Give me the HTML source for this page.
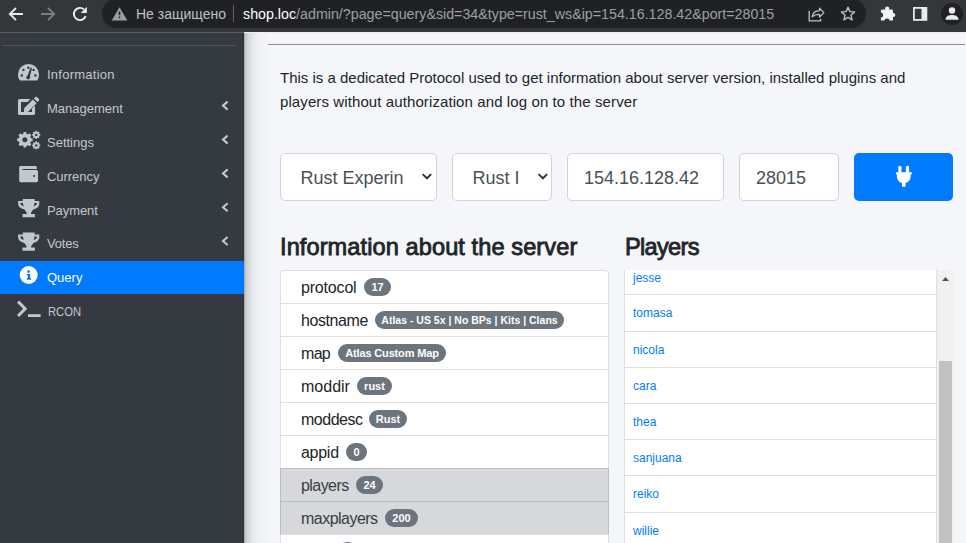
<!DOCTYPE html>
<html><head><meta charset="utf-8">
<style>
*{box-sizing:border-box;margin:0;padding:0}
html,body{width:966px;height:543px;overflow:hidden;font-family:"Liberation Sans",sans-serif;background:#f4f6f9}
.abs{position:absolute}
svg{position:absolute;overflow:visible}
#toolbar{position:absolute;left:0;top:0;width:966px;height:32px;background:#35363a;z-index:3}
#pill{position:absolute;left:102px;top:-1px;width:764px;height:29px;background:#202124;border-radius:15px}
#sidebar{position:absolute;left:0;top:33px;width:244px;height:510px;background:#343a40;border-right:1px solid #2b3036;z-index:2}
#shadow{position:absolute;left:244px;top:33px;width:28px;height:510px;z-index:2;background:linear-gradient(to right,rgba(0,0,0,.42) 0px,rgba(0,0,0,.2) 1px,rgba(0,0,0,.13) 4px,rgba(0,0,0,.075) 8px,rgba(0,0,0,.04) 12px,rgba(0,0,0,.016) 18px,rgba(0,0,0,0) 26px)}
#content{position:absolute;left:244px;top:33px;width:722px;height:510px;background:#f4f6f9;z-index:1}
.nav{position:absolute;left:0;width:244px;height:33px;color:#c2c7d0;font-size:13px}
.nav .t{position:absolute;left:47px;top:9px;white-space:nowrap}
.nav.active{background:#007bff;color:#fff}
.txt{position:absolute;color:#212529;white-space:nowrap}
.fc{position:absolute;top:120px;height:48px;background:#fff;border:1px solid #ced4da;border-radius:5px;font-size:18px;color:#495057}
.fc span{position:absolute;top:14px;white-space:nowrap}
.badge{position:absolute;top:7px;height:18px;line-height:18px;text-align:center;background:#6c757d;color:#fff;font-weight:700;font-size:11px;border-radius:9px;white-space:nowrap}
.row{position:absolute;left:36px;width:329px;height:34px;border:1px solid rgba(0,0,0,.125);background:#fff;font-size:16px;color:#212529}
.row .t{position:absolute;left:20px;top:7.6px;white-space:nowrap}
.row.g{background:#d6d8db;color:#383d41}
.prow{position:absolute;left:0;width:313px;border:1px solid rgba(0,0,0,.125);background:#fff;font-size:12px;color:#007bff}
.prow .t{position:absolute;left:8px;white-space:nowrap}
</style></head>
<body>
<div id="toolbar">
  <!-- back -->
  <svg style="left:0;top:0" width="100" height="32" viewBox="0 0 100 32">
    <path d="M23 14H10.5M16 8L9.8 14L16 20.2" fill="none" stroke="#e8eaed" stroke-width="1.9"/>
    <path d="M41 14H53.5M48 8L54.2 14L48 20.2" fill="none" stroke="#7c7e82" stroke-width="1.9"/>
    <path d="M85.7 16.1A6.1 6.1 0 1 1 83.9 9.3" fill="none" stroke="#e8eaed" stroke-width="1.9"/>
    <path d="M86.9 6.7v6.2h-6.2z" fill="#e8eaed"/>
  </svg>
  <div id="pill"></div>
  <svg style="left:102px;top:0" width="30" height="30" viewBox="102 0 30 30">
    <path d="M119.5 7.2L127.3 20.6H111.7Z" fill="#9aa0a6"/>
    <rect x="118.7" y="11.5" width="1.6" height="3.6" fill="#202124"/>
    <rect x="118.7" y="16.5" width="1.6" height="1.6" fill="#202124"/>
  </svg>
  <div class="txt" style="left:136px;top:6px;font-size:14px;color:#bdc1c6">Не защищено</div>
  <div class="abs" style="left:233px;top:5px;width:1px;height:17px;background:#5f6368"></div>
  <div class="txt" style="left:243px;top:6px;font-size:14.25px;color:#9aa0a6"><span style="color:#fff">shop.loc</span>/admin/?page=query&amp;sid=34&amp;type=rust_ws&amp;ip=154.16.128.42&amp;port=28015</div>
  <!-- share -->
  <svg style="left:800px;top:0" width="166" height="32" viewBox="800 0 166 32">
    <path d="M809.2 10.8V20.8H820.6V18.8" fill="none" stroke="#bdc1c6" stroke-width="1.3"/>
    <path d="M812.2 16.9C812.7 13 815.5 10.9 819.6 10.7V8.1L823.9 12.6L819.6 17.1V14.5C816.6 14.4 814 15.2 812.2 16.9Z" fill="none" stroke="#bdc1c6" stroke-width="1.25" stroke-linejoin="round"/>
    <path d="M848 7.2L849.9 11.6L854.6 12L851 15.1L852.1 19.8L848 17.3L843.9 19.8L845 15.1L841.4 12L846.1 11.6Z" fill="none" stroke="#bdc1c6" stroke-width="1.4" stroke-linejoin="round"/>
    <rect x="880.9" y="9.6" width="12.1" height="11" rx="1.2" fill="#f1f3f4"/><circle cx="887.2" cy="8.5" r="2.1" fill="#f1f3f4"/><circle cx="893.3" cy="15" r="2" fill="#f1f3f4"/><circle cx="880.6" cy="14.9" r="2.5" fill="#35363a"/><circle cx="887" cy="21.2" r="2.6" fill="#35363a"/>
    <rect x="913.9" y="7.9" width="12.5" height="12" fill="none" stroke="#e8eaed" stroke-width="1.8"/>
    <rect x="921.5" y="7.9" width="5" height="12" fill="#e8eaed"/>
    <circle cx="952" cy="14" r="11" fill="#202124"/>
    <circle cx="952" cy="10.5" r="3.2" fill="#e8eaed"/>
    <path d="M945.5 19.8C945.5 16.2 949 15 952 15C955 15 958.5 16.2 958.5 19.8Z" fill="#e8eaed"/>
  </svg>
</div>

<div class="abs" style="left:0;top:32px;width:244px;height:1px;background:#5c5e61;z-index:3"></div><div class="abs" style="left:244px;top:32px;width:722px;height:1px;background:#eeeff1;z-index:3"></div>
<div id="shadow"></div>
<div id="sidebar">
  <div class="abs" style="left:2px;top:12px;width:234px;height:1px;background:#4b545c"></div>
  <div class="nav" style="top:25px"><div class="t" style="letter-spacing:0.25px">Information</div></div>
  <div class="nav" style="top:59px"><div class="t">Management</div></div>
  <div class="nav" style="top:93px"><div class="t">Settings</div></div>
  <div class="nav" style="top:127px"><div class="t" style="letter-spacing:-0.05px">Currency</div></div>
  <div class="nav" style="top:160.7px"><div class="t" style="letter-spacing:-0.07px">Payment</div></div>
  <div class="nav" style="top:194px"><div class="t" style="letter-spacing:-0.2px">Votes</div></div>
  <div class="nav active" style="top:228px"><div class="t">Query</div></div>
  <div class="nav" style="top:262px"><div class="t" style="left:47.5px;transform:scaleX(0.865);transform-origin:0 0">RCON</div></div>
  <svg style="left:0;top:-33px" width="244" height="543" viewBox="0 0 244 543">
    <g fill="#c2c7d0">
      <!-- gauge -->
      <path d="M28.5 64A10.5 10.5 0 0 0 18 74.5C18 77 18.8 79 19.8 80.5H37.2C38.2 79 39 77 39 74.5A10.5 10.5 0 0 0 28.5 64Z"/>
      <!-- edit -->
      <path d="M19.5 99H30.5L27.5 102H21V112H32V108.5L35 105.5V113.5Q35 115 33.5 115H19.5Q18 115 18 113.5V100.5Q18 99 19.5 99Z"/>
      <path d="M23.7 112.5L24.4 108L32.9 99.5L36.6 103.2L28.1 111.7Z"/>
      <path d="M33.9 98.5L35.3 97.1Q36.1 96.3 36.9 97.1L38.9 99.1Q39.7 99.9 38.9 100.7L37.5 102.1Z"/>
      <!-- cogs -->
      <path d="M23.31 133.81L23.60 132.01L26.20 132.01L26.49 133.81L28.01 134.44L29.49 133.37L31.33 135.21L30.26 136.69L30.89 138.21L32.69 138.50L32.69 141.10L30.89 141.39L30.26 142.91L31.33 144.39L29.49 146.23L28.01 145.16L26.49 145.79L26.20 147.59L23.60 147.59L23.31 145.79L21.79 145.16L20.31 146.23L18.47 144.39L19.54 142.91L18.91 141.39L17.11 141.10L17.11 138.50L18.91 138.21L19.54 136.69L18.47 135.21L20.31 133.37L21.790 134.44Z"/>
      <path d="M35.40 131.80L35.54 130.75L36.86 130.75L37.00 131.80L37.83 132.15L38.67 131.50L39.60 132.43L38.95 133.27L39.30 134.10L40.35 134.24L40.35 135.56L39.30 135.70L38.95 136.53L39.60 137.37L38.67 138.30L37.83 137.65L37.00 138.00L36.86 139.05L35.54 139.05L35.40 138.00L34.57 137.65L33.730 138.30L32.80 137.37L33.45 136.53L33.10 135.70L32.05 135.56L32.05 134.24L33.10 134.10L33.45 133.27L32.80 132.43L33.73 131.50L34.57 132.15Z"/>
      <path d="M35.40 142.30L35.54 141.25L36.86 141.25L37.00 142.30L37.83 142.65L38.67 142.00L39.60 142.93L38.95 143.77L39.30 144.60L40.35 144.74L40.35 146.06L39.30 146.20L38.95 147.03L39.60 147.87L38.67 148.80L37.83 148.15L37.00 148.50L36.86 149.55L35.54 149.55L35.40 148.50L34.57 148.15L33.73 148.80L32.80 147.87L33.45 147.03L33.10 146.20L32.05 146.06L32.05 144.74L33.10 144.60L33.45 143.77L32.80 142.93L33.73 142.00L34.57 142.65Z"/>
      <!-- wallet -->
      <path d="M20.5 166H35.5C36.3 166 36.8 166.6 36.8 167.4V169H22.5V170H36.5C37.4 170 38 170.6 38 171.5V180.6C38 181.5 37.4 182.2 36.5 182.2H20.7C19.8 182.2 19.2 181.5 19.2 180.6V167.4C19.2 166.6 19.8 166 20.5 166Z"/>
      <!-- trophy -->
      <path id="tro" d="M22.8 199H34.6V200.9H39.3V203.5C39.3 206.5 37 208.6 33.5 209.3C32.6 210.4 31.6 211.5 31.1 212.6V213.9H34.9V217.2H22.5V213.9H26.6V212.6C26.1 211.5 25.1 210.4 24.2 209.3C20.6 208.6 18.1 206.5 18.1 203.5V200.9H22.8Z"/>
      <use href="#tro" y="33.6"/>
      <!-- terminal -->
      <path d="M17 302.7L19.1 300.6L27.3 308.8L19.1 317L17 314.9L23.1 308.8Z"/>
      <rect x="28" y="314.2" width="12.6" height="2.8"/>
      <!-- arrows -->
      <g fill="none" stroke="#c2c7d0" stroke-width="2.1"><path d="M227.6 101.6L223 105.6L227.6 109.6"/><path d="M227.6 135.6L223 139.6L227.6 143.6"/><path d="M227.6 169.4L223 173.4L227.6 177.4"/><path d="M227.6 203.2L223 207.2L227.6 211.2"/><path d="M227.6 237.0L223 241.0L227.6 245.0"/></g>
    </g>
    <g fill="#343a40">
      <!-- gauge details -->
      <circle cx="21.8" cy="75.5" r="1.2"/><circle cx="35.4" cy="75.5" r="1.2"/>
      <circle cx="23.4" cy="69.9" r="1.2"/><circle cx="33.6" cy="69.9" r="1.2"/><circle cx="28.3" cy="67.7" r="1.2"/>
      <path d="M26.9 77.2L30.6 67.6L32 68.1L29.6 77.8Z"/>
      <circle cx="28.2" cy="77.4" r="1.9"/>
      <!-- wallet -->
      <circle cx="34.1" cy="175.9" r="1"/>
      <!-- cog holes -->
      <circle cx="24.9" cy="139.8" r="2.5"/>
      <circle cx="36.2" cy="134.9" r="1.2"/>
      <circle cx="36.2" cy="145.4" r="1.2"/>
      <!-- trophy holes -->
      <path d="M20.4 202.9H22.9C23 204.3 23.4 205.5 23.9 206.4C21.9 206 20.6 204.8 20.4 203.6Z"/>
      <path d="M37 202.9H34.5C34.4 204.3 34 205.5 33.5 206.4C35.5 206 36.8 204.8 37 203.6Z"/>
      <path d="M20.4 236.5H22.9C23 237.9 23.4 239.1 23.9 240C21.9 239.6 20.6 238.4 20.4 237.2Z"/>
      <path d="M37 236.5H34.5C34.4 237.9 34 239.1 33.5 240C35.5 239.6 36.8 238.4 37 237.2Z"/>
    </g>
    <!-- info -->
    <circle cx="28.7" cy="275" r="9" fill="#fff"/>
    <g fill="#007bff">
      <circle cx="28.6" cy="271.6" r="1.3"/>
      <path d="M27 273.9H30.2V278H31.1V279.7H26.9V278H27.8V275.4H27Z"/>
    </g>
  </svg>
</div>

<div id="content">
  <div class="abs" style="left:24px;top:11px;width:697px;height:1px;background:#8c8c8c"></div>
  <div class="txt" style="left:36px;top:32.5px;font-size:15px;line-height:24px">This is a dedicated Protocol used to get information about server version, installed plugins and<br><span style="letter-spacing:0.1px">players without authorization and log on to the server</span></div>

  <div class="fc" style="left:36px;width:157px"><span style="left:19.5px">Rust Experin</span><svg style="left:140px;top:19px" width="12" height="8" viewBox="0 0 12 8"><path d="M1.6 1.1L5.9 5.3L10.2 1.1" fill="none" stroke="#343a40" stroke-width="2"/></svg></div>
  <div class="fc" style="left:208px;width:100px"><span style="left:19.5px">Rust I</span><svg style="left:83.5px;top:19px" width="12" height="8" viewBox="0 0 12 8"><path d="M1.6 1.1L5.9 5.3L10.2 1.1" fill="none" stroke="#343a40" stroke-width="2"/></svg></div>
  <div class="fc" style="left:323px;width:157px"><span style="left:16px">154.16.128.42</span></div>
  <div class="fc" style="left:495px;width:100px"><span style="left:16px">28015</span></div>
  <div class="abs" style="left:610px;top:120px;width:99px;height:48px;background:#007bff;border-radius:5px"><svg style="left:0;top:0" width="99" height="48" viewBox="854 153 99 48"><g fill="#fff"><rect x="898.3" y="165.8" width="3.2" height="7" rx="1.5"/><rect x="905.9" y="165.8" width="3.2" height="7" rx="1.5"/><path d="M896 172.3H911.7V174.5H910.6V176.5C910.6 180 908.3 182.3 905.5 182.9V186.8H902V182.9C899.2 182.3 896.9 180 896.9 176.5V174.5H896Z"/></g></svg></div>

  <div class="txt" style="left:36px;top:201px;letter-spacing:0.08px;font-size:23.6px;-webkit-text-stroke:0.85px #212529">Information about the server</div>
  <div class="txt" style="left:381px;top:201px;font-size:23.6px;letter-spacing:-0.7px;-webkit-text-stroke:0.85px #212529">Players</div>

  <div class="row" style="top:237px;border-radius:4px 4px 0 0"><div class="t" style="letter-spacing:-0.18px">protocol</div><div class="badge" style="left:83px;width:27px;">17</div></div>
  <div class="row" style="top:270px"><div class="t" style="letter-spacing:-0.41px">hostname</div><div class="badge" style="left:94px;width:189px;font-size:10.5px;letter-spacing:0;">Atlas - US 5x | No BPs | Kits | Clans</div></div>
  <div class="row" style="top:303px"><div class="t" style="letter-spacing:-0.7px">map</div><div class="badge" style="left:57px;width:108px;letter-spacing:-0.15px;">Atlas Custom Map</div></div>
  <div class="row" style="top:336px"><div class="t" style="letter-spacing:0px">moddir</div><div class="badge" style="left:76px;width:35px;">rust</div></div>
  <div class="row" style="top:369px"><div class="t" style="letter-spacing:-0.5px">moddesc</div><div class="badge" style="left:88px;width:38px;">Rust</div></div>
  <div class="row" style="top:402px"><div class="t" style="letter-spacing:-0.28px">appid</div><div class="badge" style="left:65px;width:21px;">0</div></div>
  <div class="row g" style="top:435px"><div class="t" style="letter-spacing:-0.57px">players</div><div class="badge" style="left:75px;width:27px;">24</div></div>
  <div class="row g" style="top:468px"><div class="t" style="letter-spacing:-0.52px">maxplayers</div><div class="badge" style="left:104px;width:33px;">200</div></div>
  <div class="row" style="top:501px"><div class="t" style="letter-spacing:0px">bots</div><div class="badge" style="left:57px;width:19px;">0</div></div>

  <div class="abs" style="left:380px;top:237px;width:330px;height:273px;overflow:hidden">
    <div class="prow" style="top:-12px;height:37px"><div class="t" style="top:12px">jesse</div></div>
    <div class="prow" style="top:24px;height:38px"><div class="t" style="top:11px">tomasa</div></div>
    <div class="prow" style="top:61px;height:37px"><div class="t" style="top:11px">nicola</div></div>
    <div class="prow" style="top:97px;height:37px"><div class="t" style="top:11px">cara</div></div>
    <div class="prow" style="top:133px;height:37px"><div class="t" style="top:11px">thea</div></div>
    <div class="prow" style="top:169px;height:37px"><div class="t" style="top:11px">sanjuana</div></div>
    <div class="prow" style="top:205px;height:38px"><div class="t" style="top:11px">reiko</div></div>
    <div class="prow" style="top:242px;height:37px"><div class="t" style="top:11px">willie</div></div>
    <div class="abs" style="left:313px;top:0;width:17px;height:273px;background:#f1f1f1"></div>
    <div class="abs" style="left:315px;top:91px;width:13px;height:200px;background:#c1c1c1"></div>
    <svg style="left:313px;top:0" width="17" height="20" viewBox="0 0 17 20"><path d="M5 11L8.5 7L12 11Z" fill="#505050"/></svg>
  </div>
</div>
</body></html>
